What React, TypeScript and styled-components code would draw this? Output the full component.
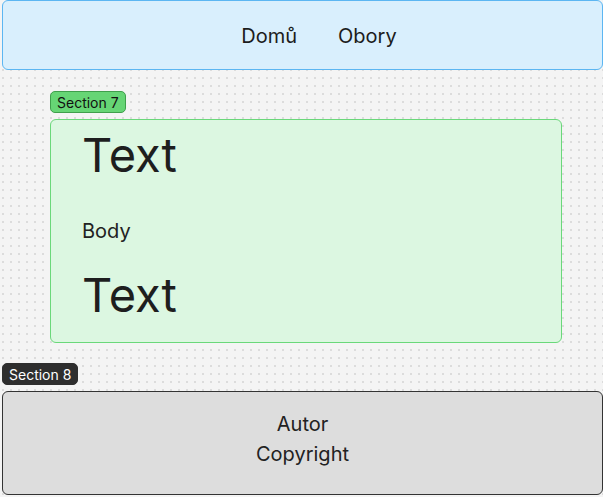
import React from "react";
import styled, { createGlobalStyle } from "styled-components";

const GlobalStyle = createGlobalStyle`
  html, body {
    margin: 0;
    padding: 0;
  }
  body {
    font-family: Inter, "Noto Sans", "Liberation Sans", sans-serif;
    color: #1f1f1f;
    background-color: #f4f4f4;
    background-image: radial-gradient(circle, #dcdcdc 1px, transparent 1.2px);
    background-size: 8px 8px;
    background-position: -1px 2px;
    min-height: 497px;
  }
`;

const Page = styled.div`
  display: flex;
  flex-direction: column;
  padding: 0 0 2px 2px;
`;

const Header = styled.nav`
  height: 70px;
  box-sizing: border-box;
  display: flex;
  justify-content: center;
  align-items: center;
  gap: 41px;
  padding: 1px 0 0 33px;
  background: #d9effd;
  border: 1px solid #5cb6f2;
  border-radius: 6px;
`;

const NavLink = styled.a`
  font-size: 20px;
  line-height: 24px;
  color: #1c1c1c;
  text-decoration: none;
  font-weight: 400;
`;

const Badge = styled.span<{ $dark?: boolean }>`
  align-self: flex-start;
  box-sizing: border-box;
  height: 22px;
  padding: 0 6px;
  display: flex;
  align-items: center;
  font-size: 14px;
  border-radius: 5px;
  background: ${(p) => (p.$dark ? "#2e2e2e" : "#66d575")};
  color: ${(p) => (p.$dark ? "#fff" : "#111")};
  border: 1px solid ${(p) => (p.$dark ? "#2e2e2e" : "#3f9f4c")};
`;

const SectionWrap = styled.section<{ $inset?: boolean }>`
  display: flex;
  flex-direction: column;
  gap: 6px;
  margin-left: ${(p) => (p.$inset ? "48px" : "0")};
  width: ${(p) => (p.$inset ? "512px" : "601px")};
`;

const Content = styled.div`
  box-sizing: border-box;
  display: flex;
  flex-direction: column;
  padding: 6px 31px 18px;
  background: #dcf7e1;
  border: 1px solid #6ad87a;
  border-radius: 6px;
`;

const Title = styled.h1<{ $gap?: number }>`
  margin: ${(p) => p.$gap ?? 0}px 0 0;
  font-size: 47px;
  line-height: 58px;
  font-weight: 400;
  color: #1e1e1e;
`;

const Body = styled.p`
  margin: 35px 0 0;
  font-size: 20px;
  line-height: 24px;
  color: #222;
`;

const Footer = styled.footer`
  box-sizing: border-box;
  height: 104px;
  display: flex;
  flex-direction: column;
  align-items: center;
  padding-top: 17px;
  background: #dddddd;
  border: 1px solid #333;
  border-radius: 6px;
`;

const FooterLine = styled.span`
  font-size: 20px;
  line-height: 30px;
  color: #222;
`;

export default function App() {
  return (
    <>
      <GlobalStyle />
      <Page>
        <Header>
          <NavLink>Domů</NavLink>
          <NavLink>Obory</NavLink>
        </Header>
        <SectionWrap $inset style={{ marginTop: 21 }}>
          <Badge>Section 7</Badge>
          <Content>
            <Title>Text</Title>
            <Body>Body</Body>
            <Title $gap={23}>Text</Title>
          </Content>
        </SectionWrap>
        <SectionWrap style={{ marginTop: 20 }}>
          <Badge $dark>Section 8</Badge>
          <Footer>
            <FooterLine>Autor</FooterLine>
            <FooterLine>Copyright</FooterLine>
          </Footer>
        </SectionWrap>
      </Page>
    </>
  );
}
